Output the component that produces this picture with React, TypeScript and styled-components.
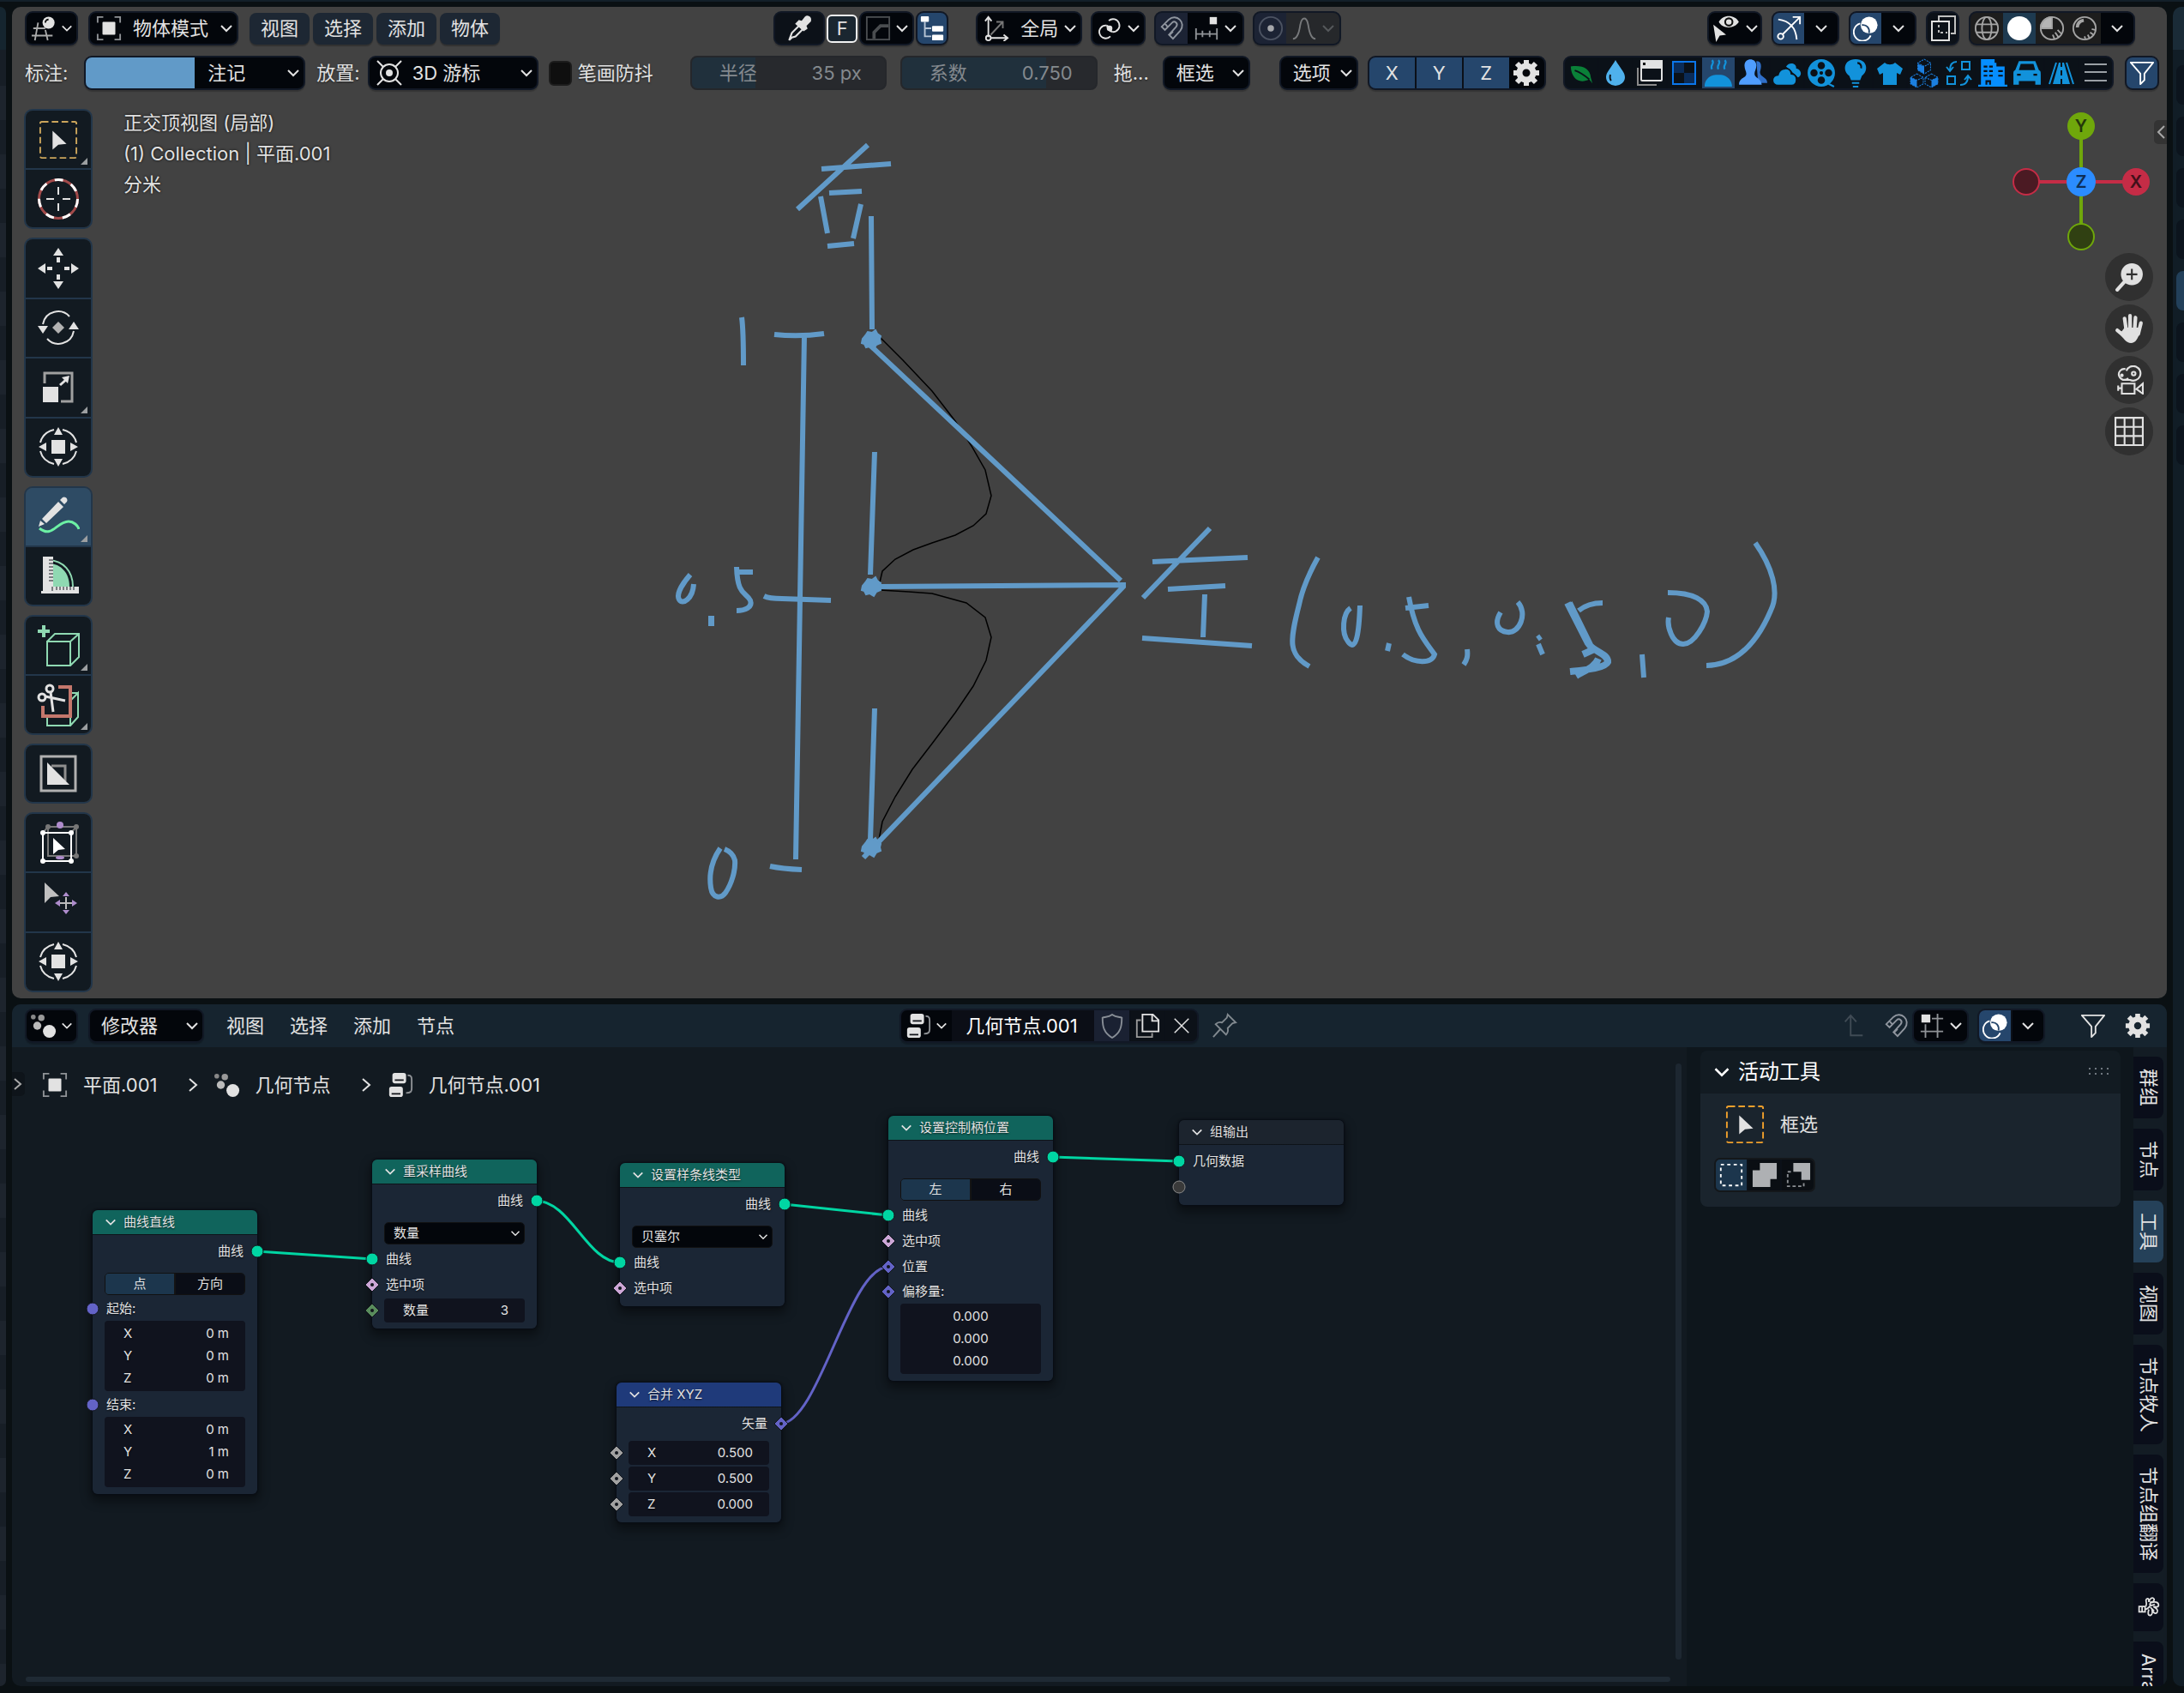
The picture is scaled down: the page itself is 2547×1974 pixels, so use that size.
import React from 'react';
import styled, { createGlobalStyle, css } from 'styled-components';

const c = {
  gap: '#0a1013',
  view: '#424242',
  header: '#16242f',
  canvas: '#121a21',
  side: '#0e161c',
  dark: '#03060b',
  line: '#111825',
  blue: '#25466c',
  text: '#e2e2e2',
  pen: '#619ac8',
};

const Global = createGlobalStyle`
  *, *::before, *::after { box-sizing: border-box; }
  body { margin: 0; background: ${c.gap}; }
  body, button, input, select {
    font-family: Inter, 'Noto Sans CJK SC', sans-serif;
    font-size: 22px;
    line-height: 32px;
    color: ${c.text};
  }
  button, input, select { margin: 0; padding: 0; border: 0; background: none; border-radius: 0; }
  svg { display: block; flex: none; }
`;

/* ---------- shell ---------- */
const Screen = styled.div`
  display: grid;
  grid-template-columns: 7px minmax(0, 1fr) 13px;
  column-gap: 7px;
  height: 100vh;
  min-height: 1400px;
  padding: 6px 0 8px;
  border-top: 2px solid #131f29;
  overflow: hidden;
`;
const LeftStrip = styled.div`
  border-radius: 0 10px 10px 0;
  background: linear-gradient(#15252f 0 50px, transparent 50px),
    repeating-linear-gradient(#171e26 0 40px, #1d242d 40px 80px);
  background-position: 0 0, 0 52px;
  background-repeat: no-repeat, repeat;
`;
const RightStrip = styled.div`
  display: flex;
  flex-direction: column;
  gap: 14px;
  padding: 68px 0 0 4px;
  border-radius: 10px 0 0 10px;
  background: linear-gradient(#1a2b37 0 50px, #111d26 50px);
`;
const StripTab = styled.div<{ $on?: boolean }>`
  height: 46px;
  border-radius: 8px 0 0 8px;
  background: ${p => (p.$on ? '#22405a' : '#0c141d')};
`;
const Main = styled.main`
  display: flex;
  flex-direction: column;
  gap: 7px;
  min-height: 0;
`;
const Viewport = styled.section`
  position: relative;
  flex: 1151 1 5px;
  min-height: 0;
  padding: 5px 9px 0 15px;
  border-radius: 10px;
  background: ${c.view};
  overflow: hidden;
`;
const NodeEditor = styled.section`
  display: flex;
  flex-direction: column;
  flex: 795 1 0;
  min-height: 0;
  border-radius: 10px;
  background: ${c.canvas};
  overflow: hidden;
`;

/* ---------- header parts ---------- */
const Bar = styled.div<{ $end?: number }>`
  position: relative;
  z-index: 2;
  display: flex;
  align-items: center;
  height: 40px;
  padding-right: ${p => p.$end || 0}px;
  white-space: nowrap;
  & + & { margin-top: 12px; }
`;
const Space = styled.span<{ $w?: number; $grow?: number }>`
  flex: ${p => (p.$grow ? `${p.$grow} 1 0` : `0 0 ${p.$w}px`)};
`;
const Group = styled.div`
  display: flex;
  flex: none;
  height: 40px;
  border: 2px solid ${c.line};
  border-radius: 9px;
  background: ${c.line};
  box-shadow: 0 2px 1px rgba(0, 0, 0, 0.2);
  overflow: hidden;
`;
const Cell = styled.button<{ $w: number; $bg?: string; $line?: boolean; $fg?: string }>`
  display: flex;
  flex: none;
  align-items: center;
  justify-content: center;
  gap: 5px;
  width: ${p => p.$w}px;
  height: 100%;
  background: ${p => p.$bg || c.dark};
  color: ${p => p.$fg || c.text};
  ${p => p.$line && css`border-left: 2px solid #0b1018;`}
`;
const MenuButton = styled.button`
  flex: none;
  width: 70px;
  height: 37px;
  margin-right: 4px;
  border-radius: 8px;
  background: #1d2733;
  box-shadow: 0 2px 1px rgba(0, 0, 0, 0.25);
`;
const FlatMenu = styled.button`
  flex: none;
  width: 74px;
  height: 38px;
`;
const SelectWrap = styled.span<{ $w: number }>`
  position: relative;
  flex: none;
  width: ${p => p.$w}px;
  height: 100%;
  & > svg { position: absolute; top: 50%; transform: translateY(-50%); pointer-events: none; }
  & > svg:first-of-type { left: 7px; }
  & > svg:last-of-type { left: auto; right: 4px; }
`;
const Select = styled.select<{ $pad: number; $small?: boolean }>`
  appearance: none;
  display: block;
  width: 100%;
  height: 100%;
  padding-left: ${p => p.$pad}px;
  background: ${c.dark};
  ${p => p.$small && css`font-size: 15px; line-height: 22px;`}
`;
const Text = styled.span`
  flex: none;
  text-shadow: 0 1px 2px rgba(0, 0, 0, 0.6);
`;
const CheckLabel = styled.label`
  display: flex;
  align-items: center;
  gap: 7px;
`;
const Check = styled.input`
  appearance: none;
  width: 27px;
  height: 29px;
  border: 2px solid #1c1c1c;
  border-radius: 6px;
  background: #0f0f0f;
`;
const Slider = styled.label<{ $w: number; $fill: number }>`
  display: flex;
  flex: none;
  align-items: center;
  justify-content: space-between;
  width: ${p => p.$w}px;
  height: 40px;
  padding: 0 27px 0 32px;
  border: 2px solid #25272b;
  border-radius: 8px;
  background: linear-gradient(90deg, #20303c ${p => p.$fill}px, #27292d ${p => p.$fill}px);
  color: #84898e;
  input { width: 90px; text-align: right; color: inherit; }
`;
const Swatch = styled.input`
  appearance: none;
  width: 127px;
  height: 36px;
  background: ${c.pen};
  &::-webkit-color-swatch-wrapper { padding: 0; }
  &::-webkit-color-swatch { border: 0; }
`;

/* ---------- viewport parts ---------- */
const ViewBody = styled.div`
  display: flex;
  align-items: flex-start;
  gap: 36px;
  margin: 22px 0 0 -1px;
`;
const Tools = styled.div`
  position: relative;
  z-index: 2;
  display: flex;
  flex-direction: column;
  gap: 10px;
`;
const ToolGroup = styled.div<{ $n: number }>`
  display: flex;
  flex-direction: column;
  width: 80px;
  height: ${p => p.$n * 70}px;
  border: 2px solid #22364a;
  border-radius: 10px;
  overflow: hidden;
`;
const Tool = styled.button<{ $on?: boolean; $more?: boolean }>`
  position: relative;
  display: grid;
  place-items: center;
  flex: 1 1 0;
  min-height: 0;
  background: ${p => (p.$on ? '#2e4b64' : '#121a21')};
  & + & { border-top: 2px solid #22364a; }
  ${p => p.$more && css`
    &::after {
      content: '';
      position: absolute;
      right: 4px;
      bottom: 4px;
      border-left: 8px solid transparent;
      border-bottom: 8px solid #9c9fa1;
    }
  `}
`;
const Info = styled.p`
  position: relative;
  z-index: 2;
  margin: -2px 0 0;
  line-height: 36px;
  text-shadow: 0 0 3px #000;
`;
const Drawing = styled.svg`
  position: absolute;
  left: 0;
  top: 0;
  width: 100%;
  height: 100%;
`;
const Gizmo = styled.svg`
  position: absolute;
  right: 15px;
  top: 119px;
  text { font: 600 20px Inter, sans-serif; text-anchor: middle; }
`;
const NavButtons = styled.div`
  position: absolute;
  right: 16px;
  top: 287px;
  display: flex;
  flex-direction: column;
  gap: 4px;
`;
const NavButton = styled.button`
  display: grid;
  place-items: center;
  width: 56px;
  height: 56px;
  border-radius: 50%;
  background: #303030;
  color: #e0e0e0;
`;
const SideHandle = styled.button`
  position: absolute;
  right: 0;
  top: 132px;
  display: grid;
  place-items: center;
  width: 15px;
  height: 28px;
  border-radius: 5px 0 0 5px;
  background: #333;
  color: #a8a8a8;
`;

/* ---------- node editor parts ---------- */
const NodeHeader = styled.header`
  display: flex;
  flex: none;
  align-items: center;
  height: 50px;
  padding: 0 15px;
  background: ${c.header};
`;
const NodeBody = styled.div`
  display: flex;
  flex: 1;
  min-height: 0;
`;
const Canvas = styled.div`
  position: relative;
  flex: 1;
  min-width: 0;
  overflow: hidden;
`;
const NameInput = styled.input`
  width: 166px;
  padding-left: 16px;
  background: #0b0e16;
  color: #fff;
`;
const Crumbs = styled.nav`
  display: flex;
  align-items: center;
  gap: 15px;
  padding: 28px 0 0 35px;
  a { display: flex; align-items: center; gap: 18px; color: ${c.text}; text-decoration: none; }
  & > svg { margin-left: 16px; }
`;
const CanvasHandle = styled(SideHandle)`
  right: auto;
  left: 0;
  top: 29px;
  border-radius: 0 5px 5px 0;
  background: #0e141a;
`;
const VScroll = styled.div`
  position: absolute;
  right: 6px;
  top: 19px;
  bottom: 31px;
  width: 7px;
  border-radius: 4px;
  background: #1d2731;
`;
const HScroll = styled.div`
  position: absolute;
  left: 16px;
  right: 19px;
  bottom: 5px;
  height: 6px;
  border-radius: 3px;
  background: #1f2a34;
`;
const NodeBox = styled.article<{ $x: number; $y: number; $top: string }>`
  position: absolute;
  left: ${p => p.$x}px;
  top: ${p => p.$y}px;
  width: 192px;
  padding-bottom: 6px;
  border-radius: 6px;
  background: linear-gradient(${p => p.$top} 28px, rgba(0, 0, 0, 0.25) 28px 29px, #1b2635 29px);
  box-shadow: 0 0 2px 1px #080c14, 0 6px 12px 3px rgba(0, 0, 0, 0.4);
  font-size: 15px;
  line-height: 22px;
  text-shadow: 0 1px 2px rgba(0, 0, 0, 0.7);
  input, button { font-size: 15px; line-height: 22px; }
`;
const NodeTitle = styled.h3`
  display: flex;
  align-items: center;
  gap: 8px;
  height: 28px;
  margin: 0 0 5px;
  padding-left: 14px;
  font-size: 15px;
  font-weight: 400;
`;
const Row = styled.div<{ $out?: boolean; $short?: boolean }>`
  position: relative;
  display: flex;
  align-items: center;
  justify-content: ${p => (p.$out ? 'flex-end' : 'flex-start')};
  height: ${p => (p.$short ? 28 : 30)}px;
  padding: 0 16px;
`;
const Socket = styled.svg<{ $right?: boolean }>`
  position: absolute;
  top: 50%;
  ${p => (p.$right ? 'right' : 'left')}: -9px;
  width: 18px;
  height: 18px;
  margin-top: -9px;
`;
const NodeControl = styled.div`
  display: flex;
  height: 26px;
  margin: 10px 14px 2px;
  border: 1px solid #111;
  border-radius: 5px;
  overflow: hidden;
`;
const Half = styled.button<{ $on?: boolean }>`
  flex: 1;
  background: ${p => (p.$on ? '#1c364d' : '#0a0d16')};
  & + & { border-left: 2px solid #141414; }
`;
const Field = styled.label<{ $boxed?: boolean }>`
  display: flex;
  align-items: center;
  justify-content: space-between;
  flex: 1;
  height: 26px;
  padding: 0 19px 0 22px;
  input { width: 70px; text-align: right; }
  ${p => p.$boxed && css`
    height: 28px;
    margin: 0 -2px;
    border-radius: 4px;
    background: #10131e;
  `}
`;
const Vector = styled.div<{ $center?: boolean }>`
  margin: 0 14px 2px;
  padding: 2px 0;
  border-radius: 4px;
  background: #10131e;
  ${p => p.$center && css`
    label { padding: 0; }
    input { width: 100%; text-align: center; }
  `}
`;
const NodeGap = styled.div`
  height: 4px;
`;

/* ---------- sidebar ---------- */
const Sidebar = styled.aside`
  display: flex;
  flex: none;
  width: 560px;
  background: ${c.side};
`;
const PanelArea = styled.div`
  flex: 1;
  padding: 4px 15px 0 16px;
`;
const PanelHead = styled.h2`
  display: flex;
  align-items: center;
  gap: 9px;
  height: 50px;
  margin: 0;
  padding: 0 13px 0 15px;
  border-radius: 8px 8px 0 0;
  background: #121b22;
  font-size: 24px;
  font-weight: 400;
  color: #fff;
  svg:last-child { margin-left: auto; }
`;
const PanelBody = styled.div`
  height: 132px;
  padding: 13px 16px 0 29px;
  border-radius: 0 0 8px 8px;
  background: #1a242d;
`;
const ActiveTool = styled.div`
  display: flex;
  align-items: center;
  gap: 18px;
  height: 46px;
  margin-bottom: 16px;
`;
const ModeRow = styled.div`
  display: flex;
  width: 118px;
  height: 40px;
  margin-left: -13px;
  border: 2px solid #14171a;
  border-radius: 7px;
  overflow: hidden;
`;
const Tabs = styled.div`
  display: flex;
  flex: none;
  flex-direction: column;
  gap: 12px;
  width: 39px;
  padding-top: 11px;
  background: #131c24;
  overflow: hidden;
`;
const Tab = styled.button<{ $on?: boolean }>`
  flex: none;
  display: flex;
  align-items: center;
  width: 35px;
  padding: 14px 0;
  border-radius: 0 8px 8px 0;
  background: ${p => (p.$on ? '#254159' : '#0a0e1a')};
  writing-mode: vertical-rl;
  text-orientation: sideways;
  line-height: 35px;
  white-space: nowrap;
`;

/* ---------- icons ---------- */
type IP = { s?: number; children?: React.ReactNode; vb?: number; w?: number; color?: string };
const I = ({ s = 30, vb = 32, w = 2, color = 'currentColor', children }: IP) => (
  <svg width={s} height={s} viewBox={`0 0 ${vb} ${vb}`} fill="none" stroke={color} strokeWidth={w} aria-hidden="true">{children}</svg>
);
const F = 'currentColor';
const Chev = ({ s = 16, color }: { s?: number; color?: string }) => <I s={s} vb={16} color={color} w={2}><path d="M2 5l6 6 6-6" /></I>;
const ChevR = ({ s = 20 }: { s?: number }) => <I s={s} vb={20}><path d="M6 3l8 7-8 7" /></I>;

const EditorIcon = () => <I><path d="M3 16h15M1 25h26M9 9L5 31M18 18l3 13" color="#aaa" /><circle cx="22" cy="9" r="7.500" fill={F} stroke="none" /><path d="M18 9a4 4 0 0 1 4-4" stroke="#111" /></I>;
const ObjectIcon = () => <I><path d="M2 9V2h7M23 2h7v7M30 23v7h-7M9 30H2v-7" stroke="#8f9296" /><rect x="8" y="8" width="16" height="16" rx="1" fill={F} stroke="none" /></I>;
const CursorIcon = () => <I s={32}><circle cx="16" cy="16" r="10" /><circle cx="16" cy="16" r="4" fill={F} stroke="none" /><path d="M2 2l7 7M30 2l-7 7M2 30l7-7M30 30l-7-7" /></I>;
const Dropper = () => <I s={34}><path d="M5 29l3-8 9-9 4 4-9 9-4 1z" /><path d="M16 8l3 1 4-5c2-2 6 0 5 4l-5 5 1 3-3 2-8-7z" fill={F} /></I>;
const FrameF = styled.button`
  display: grid;
  place-items: center;
  width: 36px;
  height: 33px;
  border: 2px solid #f2f2f2;
  border-radius: 6px;
  background: #1a2630;
  line-height: 24px;
`;
const CurveBox = () => <I color="#4a4d50"><rect x="2" y="2" width="28" height="28" /><path d="M11 29v-8l8-8h10" strokeWidth="4" /></I>;
const Tree = () => <I color="#fff"><path d="M7 8v18h8M7 16h8" stroke="#b9c6d6" /><g fill="#fff" stroke="none"><rect x="2" y="1" width="10" height="7" rx="1" /><rect x="16" y="13" width="14" height="7" rx="1" /><rect x="16" y="24" width="14" height="7" rx="1" /></g></I>;
const Axes = () => <I><path d="M6 27V3M2 7l4-5 4 5M9 28h20M25 24l5 4-5 4" /><circle cx="6" cy="28" r="3" /><path d="M9 24L24 8M16 8h8v8" stroke="#777" /></I>;
const Pivot = () => <I><path d="M17 26A8 8 0 1 1 12 12.500M15 6.500A8 8 0 1 1 20 20.500" /><path d="M12 12.500A8 8 0 0 1 18 21M20 20.500A8 8 0 0 1 13 12" /><circle cx="16" cy="16" r="3.500" fill={F} stroke="none" /></I>;
const Magnet = () => <I color="#8f959e"><path d="M3 14L12 5c9-8 22 4 14 14l-9 10-5-5 9-10c3-4-2-8-5-5l-9 9zM7 10l4 5M13 24l4-4" /></I>;
const SnapInc = () => <I color="#8f9296"><path d="M2 23h28M3 16v14M11 19v8M20 19v8M29 16v14" /><rect x="20" y="2" width="9" height="9" fill="#e2e2e2" stroke="none" /></I>;
const Prop = () => <I color="#4b5261"><circle cx="16" cy="16" r="14" /><circle cx="16" cy="16" r="4" fill="#a5a7ab" stroke="none" /></I>;
const Falloff = () => <I color="#77797b"><path d="M2 29c6 0 8-10 9-17 2-11 8-11 10 0 1 7 3 17 9 17" /></I>;
const EyePointer = () => <I s={34}><path d="M8 9c4-8 17-9 22 0-5 8-18 8-22 0z" fill={F} stroke="none" /><circle cx="19" cy="9" r="4" stroke="#111" fill={F} /><path d="M2 12l14 11-7 1-4 7z" fill={F} stroke="none" /></I>;
const GizmoIcon = () => <I color="#fff"><path d="M3 5c15 2 22 12 23 25M8 24L29 3M21 2h9v9" /><circle cx="6" cy="26" r="3.500" /></I>;
const Overlay = () => <I color="#fff"><circle cx="20" cy="12" r="10.500" fill="#fff" stroke="none" /><path d="M9 10a11 11 0 1 0 13 15" /><path d="M11 12c6-1 10 4 9 10" stroke={c.blue} /></I>;
const Xray = () => <I s={32}><path d="M11 7V2h19v20h-5" stroke="#c0c0c0" /><rect x="3" y="8" width="20" height="22" /><path d="M11 12v9M13 21h8" strokeDasharray="3 3" stroke="#bbb" /></I>;
const Wire = () => <I color="#a4a4a4"><circle cx="16" cy="16" r="14" /><ellipse cx="16" cy="16" rx="6" ry="14" /><path d="M3 11h26M3 21h26" /></I>;
const Solid = () => <I><circle cx="16" cy="16" r="15" fill="#fff" stroke="none" /></I>;
const MatPrev = () => <I color="#a4a4a4"><circle cx="16" cy="16" r="14" /><path d="M16 2v14H2A14 14 0 0 1 16 2z" fill="#b5b5b5" /><path d="M17 24l2 5M20 21l4 6M23 18l5 5" /></I>;
const Rendered = () => <I color="#a4a4a4"><circle cx="16" cy="16" r="14" /><path d="M7 15c0-5 3-8 8-9" strokeWidth="4" /><path d="M16 26l1 3M20 24l2 4M23 21l4 3M25 17l4 1" /></I>;
const Gear = ({ s = 32 }: { s?: number }) => <I s={s}><circle cx="16" cy="16" r="8" strokeWidth="7" /><g strokeWidth="6"><path d="M16 1v6M16 25v6M1 16h6M25 16h6M5 5l5 5M22 22l5 5M5 27l5-5M22 10l5-5" /></g></I>;
const Funnel = ({ color }: { color?: string }) => <I color={color}><path d="M2 3h28L19 17v8l-5 5V17z" strokeLinejoin="round" /></I>;

const B = '#1292db';
const strip: [string, React.ReactNode][] = [
  ['叶', <I s={30}><path d="M3 8c14-2 24 2 25 14l2 7-4-5C14 30 4 24 3 8z" fill="#0a8038" stroke="none" /><path d="M8 13c6 2 12 6 18 11" stroke="#0b1118" /></I>],
  ['水', <I s={32}><path d="M16 1c5 9 11 14 11 20a11 10 0 0 1-22 0C5 15 11 10 16 1z" fill="#4fb1ec" stroke="none" /><path d="M10 18c-1 4 0 6 1 7" stroke="#0b1118" /></I>],
  ['窗口', <I s={32}><path d="M2 10v20h22" stroke="#8b8b8b" /><rect x="6" y="2" width="24" height="23" rx="1" /><rect x="6" y="2" width="24" height="8" fill={F} /><rect x="8" y="4" width="3" height="3" fill="#111" stroke="none" /></I>],
  ['棋盘', <I s={32} color="#0b76ea"><path d="M3 3h13v13H3zM16 16h13v13H16z" fill="#0b2c58" stroke="none" /><rect x="3" y="3" width="26" height="26" /></I>],
  ['热', <I s={34} color={B}><path d="M9 2c4 4-3 5 0 10M16 2c4 4-3 5 0 10M23 2c4 4-3 5 0 10" /><path d="M1 31c-1-5 4-13 12-13h6c7 1 12 6 12 13z" fill={B} stroke="none" /></I>],
  ['用户', <I s={34}><path d="M20 3c6 0 6 6 4 12 0 6 8 5 8 12H22z" fill="#2f6fc9" stroke="none" /><path d="M7 8c0-9 13-9 13 0 0 4-2 6-2 9 0 5 7 4 8 12H1c0-8 8-7 8-12 0-3-2-5-2-9z" fill="#4f9dff" stroke="none" /></I>],
  ['云', <I s={34}><path d="M15 9c4-6 12-3 11 2 6 1 7 8 2 10z" fill={B} stroke="none" /><path d="M6 30a6 6 0 0 1 0-12c2-9 14-9 15-1 8 1 7 13 0 13z" fill={B} stroke="#0b1118" /></I>],
  ['胶片', <I s={34}><circle cx="16" cy="16" r="15" fill={B} stroke="none" /><g fill="#0b1118" stroke="none"><circle cx="16" cy="8" r="4" /><circle cx="16" cy="24" r="4" /><circle cx="8" cy="16" r="4" /><circle cx="24" cy="16" r="4" /><circle cx="16" cy="16" r="2" /></g><path d="M24 28l6 3" stroke={B} /></I>],
  ['灯', <I s={34}><path d="M16 1c14 0 14 14 7 18l-2 5H11l-2-5C2 15 2 1 16 1zM12 26h8v2h-8zM13 30h6v2h-6z" fill={B} stroke="none" /><path d="M18 5c3 0 5 3 4 6" stroke="#0b1118" /></I>],
  ['衣服', <I s={32}><path d="M10 4c3 3 9 3 12 0l9 7-3 7-4-2v14H8V16l-4 2-3-7z" fill={B} stroke="none" /></I>],
  ['方块', <I s={34} color="#1b7fe0"><path d="M16 1l7 4v8l-7 4-7-4V5zM8 17l7 4v7l-7 4-7-4v-7zM24 17l7 4v7l-7 4-7-4v-7zM9 5l7 4 7-4M1 21l7 3 7-3M17 21l7 3 7-3" strokeWidth="1" strokeDasharray="2 1" /><path d="M9 6l7 3v8l-7-4zM1 21l7 3v8l-7-4zM24 24l7-3v7l-7 4z" fill="#1b7fe0" stroke="none" /></I>],
  ['替换', <I s={32} color={B}><rect x="20" y="3" width="9" height="9" /><rect x="3" y="20" width="9" height="9" /><path d="M14 3C8 3 6 7 6 13M2 9l4 5 4-5M18 30c6 0 9-4 9-10M23 24l4-5 4 5" /></I>],
  ['建筑', <I s={34}><path d="M3 1h15v4h2v4h9v20h3v2H0v-2h3z" fill="#068eff" stroke="none" /><path d="M6 9h4M12 9h4M6 14h4M12 14h4M6 19h4M12 19h4M22 14h5M22 19h5M9 29v-4h4v4" stroke="#0b1118" strokeWidth="2" /></I>],
  ['汽车', <I s={34}><path d="M7 3h18l4 10c2 1 2 2 2 5v11h-6v-4H7v4H1V18c0-3 0-4 2-5z" fill={B} stroke="none" /><path d="M9 6h14l2 7H7z" fill="#0b1118" stroke="none" /><path d="M5 18h4M23 18h4" stroke="#0b1118" /></I>],
  ['道路', <I s={32} color={B}><path d="M10 4L2 29M22 4l8 25" /><path d="M13 4h6l7 25H6z" fill={B} stroke="none" /><path d="M16 4v5M16 13v6M16 23v7" stroke="#0b1118" /></I>],
  ['菜单', <I s={32} color="#9aa0a5"><path d="M3 6h26M3 15h26M3 25h26" /></I>],
];

const G = '#8fd9b2';
function BoxSelect({ color }: { color: string }) {
  return <I s={46} vb={48}><rect x="2" y="2" width="44" height="44" rx="2" stroke={color} strokeDasharray="8 4" /><path d="M17 13l17 16-10 1-7 6z" fill={F} stroke="none" /></I>;
}
const TransformIcon = () => <I s={48} vb={48} w={2}><path d="M29 4c8 2 14 7 16 15M45 29c-2 8-8 13-16 15M19 44c-8-2-14-7-16-15M3 19C5 11 11 6 19 4" /><path d="M24 1l5 9H19zM24 47l5-9H19zM1 24l9-5v10zM47 24l-9-5v10zM16 16h16v16H16z" fill={F} stroke="none" /></I>;
const toolGroups: { icon: React.ReactNode; name: string; on?: boolean; more?: boolean }[][] = [
  [
    { name: '框选', more: true, icon: <BoxSelect color="#cba55b" /> },
    { name: '游标', icon: <I s={50} vb={50}><circle cx="25" cy="25" r="22.500" stroke="#a24a4a" strokeWidth="3" /><circle cx="25" cy="25" r="22.500" stroke="#fff" strokeWidth="3" strokeDasharray="10 10.200" /><path d="M25 11v9M25 30v9M11 25h9M30 25h9" /></I> },
  ],
  [
    { name: '移动', icon: <I s={48} vb={48} w={4}><path d="M24 11v6M24 31v6M11 24h6M31 24h6" /><path d="M24 0l6 9H18zM24 48l6-9H18zM0 24l9-6v12zM48 24l-9-6v12z" fill={F} stroke="none" /></I> },
    { name: '旋转', icon: <I s={48} vb={48}><path d="M6 20C9 4 28 1 37 11M42 28C39 44 20 47 11 37" /><path d="M0 22h12l-6 9zM36 26h12l-6-9z" fill={F} stroke="none" /><path d="M24 17l7 7-7 7-7-7z" fill="#b2b2b2" stroke="none" /></I> },
    { name: '缩放', more: true, icon: <I s={48} vb={48}><path d="M8 19V7h32v33H27" stroke="#a0a0a0" strokeWidth="3" /><path d="M6 23h18v18H6z" fill={F} stroke="none" /><path d="M26 21l9-8" strokeWidth="3" /><path d="M28 12l9-2-2 9z" fill={F} stroke="none" /></I> },
    { name: '变换', icon: <TransformIcon /> },
  ],
  [
    { name: '标注', on: true, more: true, icon: <I s={50} vb={50}><path d="M3 38c15 12 20-8 34-8 6 0 11 5 12 9" stroke="#6cf0a4" strokeWidth="3" /><path d="M2 36l2-7 5 4zM6 27L25 7l6 6-20 19zM27 5l3-3c3-2 7 2 5 5l-3 3z" fill={F} stroke="none" /></I> },
    { name: '测量', icon: <I s={48} vb={48}><path d="M12 9c16 0 25 12 25 27H12z" fill={G} stroke="none" /><path d="M13 5c17 1 28 13 28 31" stroke={G} /><path d="M6 1h12v35h30v8H4v-3h2z" fill={F} stroke="none" /><path d="M18 5h-5M18 9h-5M18 13h-5M18 17h-5M18 21h-5M18 25h-5M18 29h-5M22 36v4M26 36v4M30 36v4M34 36v4M38 36v4M42 36v4M17 36v5" stroke="#121a21" strokeWidth="1" /></I> },
  ],
  [
    { name: '添加立方体', more: true, icon: <I s={50} vb={50} color={G}><path d="M8 1v14M1 8h14" strokeWidth="4" /><path d="M12 20h27v28H12zM12 20l9-9h28L39 20M49 11v27l-10 10" /></I> },
    { name: '剪切', more: true, icon: <I s={50} vb={50} color={G}><path d="M12 40v9h27v-9M39 20l9-9v28l-9 10M40 11h8" /><path d="M25 4h14v34H7V26" stroke="#c4776c" strokeWidth="4" /><g stroke="#e2e2e2" strokeWidth="3"><circle cx="15" cy="6" r="4" /><circle cx="6" cy="16" r="4" /><path d="M16 10l3 23M10 15l23 5" /></g></I> },
  ],
  [{ name: '遮罩', icon: <I s={46} vb={46}><rect x="3" y="3" width="40" height="40" stroke="#b0b0b0" strokeWidth="3" /><path d="M15 14h16v18" stroke="#8e8e8e" strokeWidth="3" /><path d="M10 10l26 26H10z" fill={F} stroke="none" /></I> }],
  [
    { name: '框选节点', icon: <I s={50} vb={50}><path d="M13 6h33v34H13zM13 6l-6 7M46 6l-6 7" stroke="#777" /><g fill="#777" stroke="none"><circle cx="13" cy="6" r="3" /><circle cx="46" cy="6" r="3" /><circle cx="46" cy="40" r="3" /></g><rect x="7" y="13" width="33" height="33" stroke="#fff" /><g fill="#fff" stroke="none"><circle cx="7" cy="13" r="3" /><circle cx="40" cy="13" r="3" /><circle cx="7" cy="46" r="3" /><circle cx="40" cy="46" r="3" /><path d="M19 19l14 13-8 1-6 5z" /></g><circle cx="27" cy="4" r="4" fill="#ae8ccc" stroke="none" /><ellipse cx="27" cy="42" rx="5" ry="2" fill="#ae8ccc" stroke="none" /></I> },
    { name: '移动节点', icon: <I s={48} vb={48} color="#bbb"><path d="M8 1l17 16-10 1-7 7z" fill="#c0c0c0" stroke="none" /><path d="M33 18v14M26 25h14" /><path d="M33 12l4 5h-8zM33 38l4-5h-8zM20 25l6-4v8zM46 25l-6-4v8z" fill="#ae8ccc" stroke="none" /></I> },
    { name: '变换', icon: <TransformIcon /> },
  ],
];
const Dots = () => <I><g stroke="none"><circle cx="3" cy="5" r="3" fill="#888" /><circle cx="13" cy="6" r="4" fill="#999" /><circle cx="8" cy="16" r="5" fill="#bbb" /><circle cx="23" cy="23" r="8" fill={F} /></g></I>;
const NodeTree = () => <I><g fill={F} stroke="none"><rect x="6" y="1" width="17" height="13" rx="3" /><rect x="2" y="18" width="17" height="13" rx="3" /></g><path d="M9 10h11M5 27h11" stroke="#101318" /><path d="M25 4c5 0 5 3 5 6v10c0 4-1 6-7 6" stroke="#8f9296" /></I>;

/* ---------- small composites ---------- */
const Pick = ({ w, pad, value, icon, label, small }: { w: number; pad: number; value: string; icon?: React.ReactNode; label: string; small?: boolean }) => (
  <SelectWrap $w={w}>
    <Select $pad={pad} $small={small} aria-label={label} defaultValue={value}><option>{value}</option></Select>
    {icon}
    <Chev s={small ? 12 : 16} />
  </SelectWrap>
);
const colors = { geo: '#00d6a3', vec: '#6363c7', bool: '#cca6d6', int: '#598c5c', num: '#a1a1a1', none: '#3a3a3a' };
const Pin = ({ kind, diamond, right }: { kind: keyof typeof colors; diamond?: boolean; right?: boolean }) => (
  <Socket $right={right} viewBox="0 0 18 18" aria-hidden="true">
    {diamond
      ? <><path d="M9 1l8 8-8 8-8-8z" fill={colors[kind]} stroke="#11151c" /><circle cx="9" cy="9" r="2" fill="#11151c" /></>
      : <circle cx="9" cy="9" r="7" fill={colors[kind]} stroke={kind === 'none' ? '#8a8a8a' : '#11151c'} />}
  </Socket>
);
const Title = ({ children }: { children: React.ReactNode }) => <NodeTitle><Chev s={14} />{children}</NodeTitle>;
const Toggle = ({ items }: { items: string[] }) => (
  <NodeControl>{items.map((t, i) => <Half key={t} $on={i === 0} aria-pressed={i === 0}>{t}</Half>)}</NodeControl>
);
const Num = ({ name, value, boxed, hide }: { name: string; value: string; boxed?: boolean; hide?: boolean }) => (
  <Field $boxed={boxed}>{!hide && <span>{name}</span>}<input defaultValue={value} aria-label={name} /></Field>
);

const strokes: [string, number][] = [
  ['M930 244L1012 169M958 197L1039 191M967 225L1005 223M957 229L965 272M1004 238L995 278M965 287L996 284', 6],
  ['M1016 252L1017 384M938 391L928 1002M1020 527L1015 670M1020 826L1015 979M865 370C867 385 867 400 867 426', 6],
  ['M1012 400L1307 677M1024 684L1313 682M1007 1000L1311 683', 6],
  ['M903 390Q932 393 961 389M891 695Q897 698 912 698L969 700M898 1010Q912 1013 935 1014', 6],
  ['M805 670C798 678 788 692 792 699C796 706 808 698 809 681', 6],
  ['M859 661C860 695 870 690 875 700C878 708 869 712 859 712M861 667H878', 6],
  ['M840 989C829 1005 827 1022 829 1035C831 1048 841 1048 846 1041C853 1031 858 1015 857 1003C855 995 850 992 845 990', 6],
  ['M1411 616L1333 697M1344 655L1455 650M1362 687L1429 683M1405 693L1403 743M1332 744L1460 753', 6],
  ['M1537 650C1523 675 1517 695 1515 705C1504 748 1502 763 1527 777', 6],
  ['M1575 709C1566 715 1564 738 1572 748C1582 762 1585 735 1586 706', 6],
  ['M1620 750L1618 759M1643 696C1650 735 1660 745 1673 763C1670 774 1650 774 1636 763M1639 709L1666 706M1711 757C1712 765 1711 769 1707 775', 6],
  ['M1750 714C1742 727 1747 736 1758 737C1772 739 1782 715 1770 702M1797 742L1793 745M1794 751L1799 763', 6],
  ['M1841 712Q1852 703 1869 703M1915 763L1917 790M1945 691C1975 691 1990 700 1991 713C1990 726 1976 751 1963 751C1950 751 1944 730 1946 720', 6],
  ['M1828 703L1852 750C1858 760 1876 762 1875 772C1872 779 1850 781 1831 783M1830 703L1857 758L1846 763M1864 768C1860 778 1848 782 1838 788', 8],
  ['M2047 633C2066 660 2076 690 2065 712C2051 745 2028 775 1990 776', 6],
];
const blob = (x: number, y: number) => <path d={`M${x - 10} ${y - 1}l4-5 2-3 5 1 4-3 2 4 4 3-1 4 1 4-5 2-3 5-5-3-4 1-2-4-3-1z`} />;

export default function App() {
  return (
    <>
      <Global />
      <Screen>
        <LeftStrip />
        <Main>
          <Viewport aria-label="3D 视图">
            <Drawing aria-hidden="true">
              <g transform="translate(-14 -8)" fill="none">
                <path stroke="#000" strokeWidth="1.500" d="M1024 391L1053 420L1087 456L1114 491L1133 520L1149 548L1156 578L1150 599L1135 613L1114 624L1087 633L1065 641L1044 652L1029 666L1025 683M1026 688L1060 690L1087 692L1127 703L1149 720L1156 743L1150 770L1135 800L1114 831L1087 867L1064 897L1044 929L1029 958L1025 979" />
                {strokes.map(([d, w]) => <path key={d} d={d} stroke={c.pen} strokeWidth={w} />)}
                <g fill={c.pen} stroke={c.pen} strokeWidth="2">{blob(1016, 396)}{blob(1016, 684)}{blob(1016, 988)}<path d="M827 719h5v10h-5z" /></g>
              </g>
            </Drawing>

            <Bar $end={28}>
              <Group><Cell $w={58} aria-label="编辑器类型"><EditorIcon /><Chev s={14} /></Cell></Group>
              <Space $w={12} />
              <Group><Pick w={171} pad={50} value="物体模式" label="模式" icon={<ObjectIcon />} /></Group>
              <Space $w={13} />
              {['视图', '选择', '添加', '物体'].map(t => <MenuButton key={t}>{t}</MenuButton>)}
              <Space $grow={317} />
              <Group><Cell $w={56} $bg="#0c1118" aria-label="吸管"><Dropper /></Cell></Group>
              <Space $w={2} />
              <FrameF>F</FrameF>
              <Space $w={2} />
              <Group><Cell $w={60} aria-label="曲线"><CurveBox /><Chev /></Cell></Group>
              <Space $w={2} />
              <Group><Cell $w={34} $bg={c.blue} aria-label="层级"><Tree /></Cell></Group>
              <Space $w={32} />
              <Group><Pick w={120} pad={50} value="全局" label="坐标系" icon={<Axes />} /></Group>
              <Space $w={10} />
              <Group><Cell $w={60} aria-label="轴心点"><Pivot /><Chev /></Cell></Group>
              <Space $w={10} />
              <Group>
                <Cell $w={37} $bg="#1c2334" aria-label="吸附"><Magnet /></Cell>
                <Cell $w={64} aria-label="吸附至"><SnapInc /><Chev /></Cell>
              </Group>
              <Space $w={10} />
              <Group>
                <Cell $w={37} $bg="#1c2334" aria-label="衰减编辑"><Prop /></Cell>
                <Cell $w={62} $bg="#26282b" aria-label="衰减"><Falloff /><Chev color="#55585b" /></Cell>
              </Group>
              <Space $grow={429} />
              <Group><Cell $w={60} aria-label="可见性"><EyePointer /><Chev /></Cell></Group>
              <Space $w={11} />
              <Group><Cell $w={36} $bg={c.blue} aria-label="控件"><GizmoIcon /></Cell><Cell $w={39} aria-label="控件选项"><Chev /></Cell></Group>
              <Space $w={11} />
              <Group><Cell $w={36} $bg={c.blue} aria-label="叠加层"><Overlay /></Cell><Cell $w={39} aria-label="叠加层选项"><Chev /></Cell></Group>
              <Space $w={11} />
              <Group><Cell $w={35} $bg="#0c1118" aria-label="透视"><Xray /></Cell></Group>
              <Space $w={11} />
              <Group>
                <Cell $w={38} $bg="#1d1d1d" aria-label="线框"><Wire /></Cell>
                <Cell $w={38} $bg="#1e3a50" aria-label="实体"><Solid /></Cell>
                <Cell $w={38} $bg="#1d1d1d" aria-label="材质"><MatPrev /></Cell>
                <Cell $w={38} $bg="#1d1d1d" aria-label="渲染"><Rendered /></Cell>
                <Cell $w={38} aria-label="着色选项"><Chev /></Cell>
              </Group>
            </Bar>

            <Bar>
              <Text>标注:</Text>
              <Space $w={19} />
              <Group>
                <Swatch type="color" defaultValue={c.pen} aria-label="颜色" />
                <Pick w={127} pad={15} value="注记" label="图层" />
              </Group>
              <Space $w={13} />
              <Text>放置:</Text>
              <Space $w={9} />
              <Group><Pick w={195} pad={50} value="3D 游标" label="放置" icon={<CursorIcon />} /></Group>
              <Space $w={12} />
              <CheckLabel><Check type="checkbox" /><Text>笔画防抖</Text></CheckLabel>
              <Space $w={43} />
              <Slider $w={229} $fill={74}>半径<input defaultValue="35 px" /></Slider>
              <Space $w={16} />
              <Slider $w={230} $fill={168}>系数<input defaultValue="0.750" /></Slider>
              <Space $w={19} />
              <Text>拖...</Text>
              <Space $w={16} />
              <Group><Pick w={98} pad={14} value="框选" label="拖动" /></Group>
              <Space $w={34} />
              <Group><Pick w={88} pad={14} value="选项" label="选项" /></Group>
              <Space $w={11} />
              <Group>
                <Cell $w={53} $bg={c.blue}>X</Cell>
                <Cell $w={55} $bg={c.blue} $line>Y</Cell>
                <Cell $w={55} $bg={c.blue} $line>Z</Cell>
                <Cell $w={41} aria-label="设置"><Gear /></Cell>
              </Group>
              <Space $grow={1} />
              <Group>
                {strip.map(([n, ic], i) => <Cell key={n} $w={i ? 40 : 38} $line={i > 0} $bg={i === 4 ? c.blue : '#0b1118'} aria-label={n}>{ic}</Cell>)}
              </Group>
              <Space $w={13} />
              <Group><Cell $w={36} $bg={c.blue} aria-label="过滤"><Funnel color="#fff" /></Cell></Group>
            </Bar>

            <ViewBody>
              <Tools>
                {toolGroups.map((g, i) => (
                  <ToolGroup key={i} $n={g.length}>
                    {g.map(t => <Tool key={t.name} $on={t.on} $more={t.more} aria-label={t.name}>{t.icon}</Tool>)}
                  </ToolGroup>
                ))}
              </Tools>
              <Info>正交顶视图 (局部)<br />(1) Collection | 平面.001<br />分米</Info>
            </ViewBody>

            <Gizmo width="170" height="170" viewBox="0 0 170 170" role="img" aria-label="坐标轴">
              <path d="M85 20v130" stroke="#6fa70b" strokeWidth="4" />
              <path d="M20 85h130" stroke="#c52c46" strokeWidth="4" />
              <circle cx="85" cy="20" r="16" fill="#6fa70b" />
              <circle cx="149" cy="85" r="16" fill="#c52c46" />
              <circle cx="21" cy="85" r="15" fill="#4b1a23" stroke="#c52c46" strokeWidth="2" />
              <circle cx="85" cy="149" r="15" fill="#304012" stroke="#6fa70b" strokeWidth="2" />
              <circle cx="85" cy="85" r="17" fill="#2b8cff" />
              <text x="85" y="27" fill="#24370a">Y</text>
              <text x="149" y="92" fill="#42101a">X</text>
              <text x="85" y="92" fill="#0e2f57">Z</text>
            </Gizmo>
            <NavButtons>
              <NavButton aria-label="缩放视图"><I s={34}><circle cx="19" cy="13" r="12" fill={F} stroke="none" /><path d="M11 21l-8 9" strokeWidth="4" strokeLinecap="round" /><path d="M19 7v12M13 13h12" stroke="#303030" /></I></NavButton>
              <NavButton aria-label="平移视图"><I s={34}><g strokeWidth="4" strokeLinecap="round"><path d="M11 5l2 14M17 2v16M23 4l-1 14M29 10l-3 12M3 18l6 5" /></g><path d="M8 19l3-4h15l2 4c-2 8-5 13-10 13S10 27 4 20z" fill={F} stroke="none" /></I></NavButton>
              <NavButton aria-label="摄像机视图"><I s={34}><path d="M15 14a6 6 0 1 1-3-10M13 6a8 8 0 1 1 4 10H8" /><circle cx="21" cy="9" r="2" /><circle cx="8" cy="11" r="1" /><path d="M8 20h14v11H8zM4 22v6M4 25h4M31 20v11l-7-5z" /></I></NavButton>
              <NavButton aria-label="切换正交"><I s={34}><path d="M1 1h30v30H1zM1 11h30M1 21h30M11 1v30M21 1v30" /></I></NavButton>
            </NavButtons>
            <SideHandle aria-label="展开侧栏"><I s={16} vb={16}><path d="M12 1L5 8l7 7" /></I></SideHandle>
          </Viewport>

          <NodeEditor aria-label="几何节点编辑器">
            <NodeHeader>
              <Group><Cell $w={58} aria-label="编辑器类型"><Dots /><Chev s={14} /></Cell></Group>
              <Space $w={12} />
              <Group><Pick w={131} pad={13} value="修改器" label="节点树类型" /></Group>
              <Space $w={11} />
              {['视图', '选择', '添加', '节点'].map(t => <FlatMenu key={t}>{t}</FlatMenu>)}
              <Space $grow={505} />
              <Group>
                <Cell $w={59} aria-label="浏览节点组"><NodeTree /><Chev s={14} /></Cell>
                <NameInput defaultValue="几何节点.001" aria-label="名称" />
                <Cell $w={41} $bg="#1a2132" aria-label="伪用户"><I color="#888e96"><path d="M16 2c4 3 8 3 12 4 0 12-2 19-12 25C6 25 4 18 4 6c4-1 8-1 12-4z" /></I></Cell>
                <Cell $w={40} $bg="#0c1118" $line aria-label="复制"><I><path d="M8 9H3v21h19v-5" stroke="#999" /><path d="M10 2h13l7 7v14H10zM22 2v8h8" /></I></Cell>
                <Cell $w={39} $bg="#0c1118" $line aria-label="解除"><I s={24}><path d="M5 5l22 22M27 5L5 27" /></I></Cell>
              </Group>
              <Space $w={13} />
              <Cell $w={34} $bg="transparent" $fg="#81898f" aria-label="固定"><I><path d="M2 30l9-10M20 2l10 10-4 1-6 6c1 4 0 6-2 8L5 14c2-2 5-3 8-2l6-6z" /></I></Cell>
              <Space $grow={700} />
              <Cell $w={36} $bg="transparent" $fg="#404b55" aria-label="上级"><I><path d="M12 3v25h15M5 11l7-8 7 8" /></I></Cell>
              <Space $w={13} />
              <Cell $w={37} $bg="transparent" aria-label="吸附"><Magnet /></Cell>
              <Group><Cell $w={62} aria-label="吸附至"><I color="#8f9296"><path d="M2 23h28M8 14v17M16 7h14M23 1v30" /><rect x="3" y="2" width="11" height="10" fill="#e2e2e2" stroke="none" /></I><Chev /></Cell></Group>
              <Space $w={10} />
              <Group><Cell $w={37} $bg={c.blue} aria-label="叠加层"><Overlay /></Cell><Cell $w={38} $line aria-label="叠加层选项"><Chev /></Cell></Group>
              <Space $w={38} />
              <Cell $w={36} $bg="transparent" aria-label="过滤"><Funnel /></Cell>
              <Space $w={15} />
              <Cell $w={38} $bg="transparent" aria-label="设置"><Gear s={30} /></Cell>
            </NodeHeader>

            <NodeBody>
              <Canvas>
                <Drawing aria-hidden="true">
                  <g transform="translate(-14 -1221)" fill="none" strokeWidth="3">
                    <path stroke={colors.geo} d="M300 1459L434 1468M625 1400C665 1400 685 1472 723 1472M914 1404L1036 1417M1227 1349L1375 1354" />
                    <path stroke={colors.vec} d="M910 1660C955 1660 990 1477 1036 1477" />
                  </g>
                </Drawing>
                <CanvasHandle aria-label="展开工具栏"><I s={16} vb={16}><path d="M3 2l7 6-7 6" /></I></CanvasHandle>
                <Crumbs aria-label="路径">
                  <a href="#object"><ObjectIcon />平面.001</a><ChevR />
                  <a href="#modifier"><Dots />几何节点</a><ChevR />
                  <a href="#tree"><NodeTree />几何节点.001</a>
                </Crumbs>

                <NodeBox $x={94} $y={190} $top="#10645c">
                  <Title>曲线直线</Title>
                  <Row $out>曲线<Pin kind="geo" right /></Row>
                  <Toggle items={['点', '方向']} />
                  <Row $short>起始:<Pin kind="vec" /></Row>
                  <Vector><Num name="X" value="0 m" /><Num name="Y" value="0 m" /><Num name="Z" value="0 m" /></Vector>
                  <Row $short>结束:<Pin kind="vec" /></Row>
                  <Vector><Num name="X" value="0 m" /><Num name="Y" value="1 m" /><Num name="Z" value="0 m" /></Vector>
                </NodeBox>

                <NodeBox $x={420} $y={131} $top="#10645c">
                  <Title>重采样曲线</Title>
                  <Row $out>曲线<Pin kind="geo" right /></Row>
                  <NodeControl><Pick w={162} pad={10} value="数量" label="模式" small /></NodeControl>
                  <Row>曲线<Pin kind="geo" /></Row>
                  <Row>选中项<Pin kind="bool" diamond /></Row>
                  <Row><Num name="数量" value="3" boxed /><Pin kind="int" diamond /></Row>
                </NodeBox>

                <NodeBox $x={709} $y={135} $top="#10645c">
                  <Title>设置样条线类型</Title>
                  <Row $out>曲线<Pin kind="geo" right /></Row>
                  <NodeControl><Pick w={162} pad={10} value="贝塞尔" label="样条线类型" small /></NodeControl>
                  <Row>曲线<Pin kind="geo" /></Row>
                  <Row>选中项<Pin kind="bool" diamond /></Row>
                </NodeBox>

                <NodeBox $x={705} $y={391} $top="#1f3a7a">
                  <Title>合并 XYZ</Title>
                  <Row $out>矢量<Pin kind="vec" diamond right /></Row>
                  <NodeGap />
                  <Row><Num name="X" value="0.500" boxed /><Pin kind="num" diamond /></Row>
                  <Row><Num name="Y" value="0.500" boxed /><Pin kind="num" diamond /></Row>
                  <Row><Num name="Z" value="0.000" boxed /><Pin kind="num" diamond /></Row>
                </NodeBox>

                <NodeBox $x={1022} $y={80} $top="#10645c">
                  <Title>设置控制柄位置</Title>
                  <Row $out>曲线<Pin kind="geo" right /></Row>
                  <Toggle items={['左', '右']} />
                  <Row>曲线<Pin kind="geo" /></Row>
                  <Row>选中项<Pin kind="bool" diamond /></Row>
                  <Row>位置<Pin kind="vec" diamond /></Row>
                  <Row $short>偏移量:<Pin kind="vec" diamond /></Row>
                  <Vector $center><Num hide name="X" value="0.000" /><Num hide name="Y" value="0.000" /><Num hide name="Z" value="0.000" /></Vector>
                </NodeBox>

                <NodeBox $x={1361} $y={85} $top="#1c242e">
                  <Title>组输出</Title>
                  <Row>几何数据<Pin kind="geo" /></Row>
                  <Row><Pin kind="none" /></Row>
                </NodeBox>

                <VScroll />
                <HScroll />
              </Canvas>

              <Sidebar>
                <PanelArea>
                  <PanelHead>
                    <Chev s={20} />活动工具
                    <svg width="24" height="10" viewBox="0 0 24 10" fill="#707880" aria-hidden="true">
                      {[1, 8, 15, 22].map(x => [0, 6].map(y => <rect key={`${x}-${y}`} x={x - 1} y={y} width="2" height="2" />))}
                    </svg>
                  </PanelHead>
                  <PanelBody>
                    <ActiveTool><BoxSelect color="#f0a02c" />框选</ActiveTool>
                    <ModeRow>
                      <Cell $w={36} $bg="#1c364d" aria-label="新建"><I color="#fff"><rect x="3" y="3" width="26" height="26" strokeDasharray="4 4" /></I></Cell>
                      <Cell $w={39} $bg="#0a0e13" $line aria-label="扩展"><I color="none"><path d="M10 1h21v20h-8v10H1V10h9z" fill="#aeb0b3" /></I></Cell>
                      <Cell $w={39} $bg="#0a0e13" $line aria-label="减去"><I color="#8b8f94"><path d="M10 1h21v21H20V12H10z" fill="#aeb0b3" stroke="none" /><path d="M7 12H3v18h20v-4" strokeDasharray="4 3" /></I></Cell>
                    </ModeRow>
                  </PanelBody>
                </PanelArea>
                <Tabs role="tablist">
                  {['群组', '节点', '工具', '视图', '节点牧人', '节点组翻译'].map(t => <Tab key={t} role="tab" $on={t === '工具'} aria-selected={t === '工具'}>{t}</Tab>)}
                  <Tab role="tab" aria-label="资产"><I s={28}><path d="M3 15h8v7H3zM7 15v7M11 19c4-1 6-3 8-7M12 15c3-6-2-7 1-10 3-2 3 2 3 4 1-5 5-7 7-4 1 3-2 4-4 5 5-2 10-1 10 3 0 3-4 3-7 2 4 2 7 5 5 8-3 3-6-1-7-5 1 4 1 8-2 9-4 0-3-5-2-8M19 8l-2 5M24 12l-5 2M23 21l-5-5" /></I></Tab>
                  <Tab role="tab">Array</Tab>
                </Tabs>
              </Sidebar>
            </NodeBody>
          </NodeEditor>
        </Main>
        <RightStrip>
          {[0, 1, 2, 3, 4, 5, 6, 7].map(i => <StripTab key={i} $on={i === 4} />)}
        </RightStrip>
      </Screen>
    </>
  );
}
